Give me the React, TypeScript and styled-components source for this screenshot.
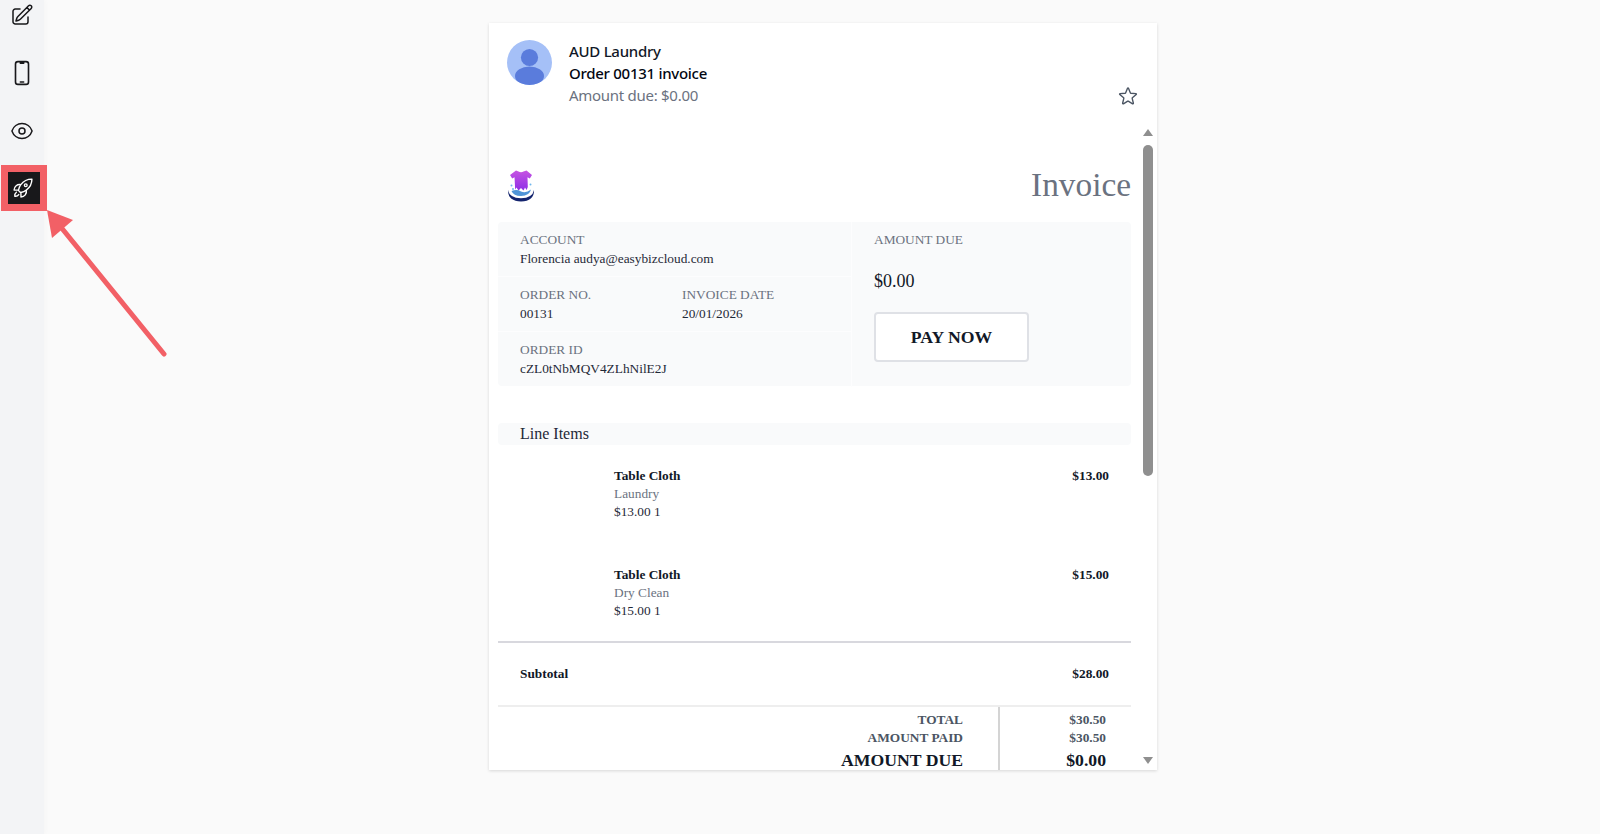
import type React from "react"
import styled, { createGlobalStyle } from "styled-components"
import {
  HiOutlineDevicePhoneMobile,
  HiOutlineEye,
  HiOutlinePencilSquare,
  HiOutlineRocketLaunch,
  HiOutlineStar,
} from "react-icons/hi2"

const GlobalStyle = createGlobalStyle`
  html, body {
    margin: 0;
    height: 100%;
    background: #fafafa;
  }
  * {
    box-sizing: border-box;
  }
`

const Page = styled.div`
  position: relative;
  display: flex;
  width: 1600px;
  height: 834px;
  overflow: hidden;
  background: #fafafa;
`

const Sidebar = styled.nav`
  flex: 0 0 44px;
  width: 44px;
  min-width: 0;
  display: flex;
  flex-direction: column;
  align-items: center;
  gap: 28px;
  background: #f3f4f6;
  box-shadow: 2px 0 4px rgba(0, 0, 0, 0.02);
`

const SideIcon = styled.div<{ $size: number }>`
  height: 30px;
  display: flex;
  align-items: center;
  justify-content: center;
  color: #18181b;
  font-size: ${(p) => p.$size}px;
`

const HighlightedIcon = styled.div`
  flex: 0 0 46px;
  width: 46px;
  height: 46px;
  margin: -9px 0 0 4px;
  padding: 0 2px 1px 0;
  border: 7px solid #f26066;
  background: #18181b;
  color: #fff;
  display: flex;
  align-items: center;
  justify-content: center;
  font-size: 22px;
`

const ArrowLayer = styled.svg`
  position: absolute;
  left: 0;
  top: 0;
  pointer-events: none;
`

const Main = styled.main`
  flex: 1;
  padding: 23px 443px 0 445px;
`

const Card = styled.article`
  width: 668px;
  height: 747px;
  background: #fff;
  box-shadow: 0 1px 3px rgba(0, 0, 0, 0.14);
  display: flex;
  flex-direction: column;
  overflow: hidden;
`

const CardHeader = styled.header`
  flex: 0 0 110px;
  display: flex;
  padding: 17px 18px 0 18px;
  font-family: "Noto Sans", sans-serif;
`

const Avatar = styled.svg`
  flex: 0 0 45px;
  width: 45px;
  height: 45px;
`

const HeaderText = styled.div`
  flex: 1;
  margin-left: 17px;
  font-size: 15px;
  line-height: 22px;
  letter-spacing: -0.28px;
  color: #111827;
`

const Shop = styled.div`
  font-weight: 500;
`

const OrderTitle = styled.div`
  font-weight: 500;
  color: #030712;
`

const AmountLine = styled.div`
  color: #6b7280;
`

const StarButton = styled.div`
  align-self: flex-start;
  margin-top: 45px;
  font-size: 22px;
  line-height: 0;
  color: #4b5563;
`

const BodyRow = styled.div`
  flex: 1;
  min-height: 0;
  display: flex;
`

const Invoice = styled.div`
  flex: 1;
  min-width: 0;
  padding: 0 0 0 9px;
  font-family: "Liberation Serif", serif;
  overflow: hidden;
`

const Scrollbar = styled.div`
  flex: 0 0 26px;
  display: flex;
  flex-direction: column;
  align-items: center;
  background: #fff;
`

const ScrollArrow = styled.div<{ $down?: boolean }>`
  flex: 0 0 auto;
  width: 0;
  height: 0;
  border-left: 5px solid transparent;
  border-right: 5px solid transparent;
  ${(p) => (p.$down ? "border-top: 7px solid #8f8f8f;" : "border-bottom: 7px solid #8f8f8f;")}
  margin-top: ${(p) => (p.$down ? "281px" : "-4px")};
  margin-left: 7px;
`

const ScrollThumb = styled.div`
  width: 10px;
  height: 331px;
  margin: 9px 0 0 7px;
  border-radius: 5px;
  background: #8f8f8f;
`

const TitleRow = styled.div`
  height: 89px;
  padding: 36px 0 0 9px;
  display: flex;
  justify-content: space-between;
  align-items: flex-start;
`

const Logo = styled.svg`
  width: 28px;
  height: 32px;
  margin-top: 1px;
`

const InvoiceTitle = styled.h1`
  margin: -4px 0 0;
  font-size: 33.33px;
  line-height: 40px;
  font-weight: 400;
  color: #6b7280;
`

const InfoPanel = styled.section`
  display: grid;
  grid-template-columns: 354px 1fr;
  height: 164px;
  background: #f9fafb;
  border-radius: 4px;
`

const InfoLeft = styled.div`
  display: flex;
  flex-direction: column;
  border-right: 1px solid #fdfdfe;
`

const InfoCellRow = styled.div`
  height: 55px;
  display: flex;
  border-bottom: 1px solid #fdfdfe;

  &:last-child {
    border-bottom: 0;
  }
`

const InfoCell = styled.div<{ $w?: number }>`
  width: ${(p) => (p.$w ? `${p.$w}px` : "auto")};
  padding: 8px 0 0 22px;
`

const Label = styled.div`
  font-size: 13.33px;
  line-height: 20px;
  color: #6b7280;
`

const Value = styled.div`
  font-size: 13.33px;
  line-height: 18px;
  color: #1f2937;
`

const DueCell = styled.div`
  padding: 8px 0 0 22px;
`

const DueAmount = styled.div`
  margin-top: 21px;
  font-size: 18px;
  line-height: 20px;
  color: #111827;
`

const PayButton = styled.button`
  display: block;
  width: 155px;
  height: 50px;
  margin-top: 21px;
  background: #fff;
  border: 2px solid #dfe1e6;
  border-radius: 4px;
  font-family: "Liberation Serif", serif;
  font-size: 17.7px;
  font-weight: 700;
  color: #111827;
`

const SectionHead = styled.div`
  height: 22px;
  margin-top: 37px;
  padding-left: 22px;
  background: #f9fafb;
  border-radius: 4px;
  font-size: 16px;
  line-height: 22px;
  color: #1f2937;
`

const LineItem = styled.div`
  height: 98.5px;
  padding: 22px 22px 0 116px;
  display: flex;
  justify-content: space-between;
  font-size: 13.33px;
  line-height: 18px;
`

const ItemName = styled.div`
  font-weight: 700;
  color: #111827;
`

const ItemKind = styled.div`
  color: #6b7280;
`

const ItemQty = styled.div`
  color: #1f2937;
`

const ItemPrice = styled.div`
  font-weight: 700;
  color: #111827;
`

const SubtotalRow = styled.div`
  height: 66px;
  margin-top: -1px;
  padding: 0 22px;
  border-top: 2px solid #d8d8de;
  border-bottom: 2px solid #eeeeee;
  display: flex;
  justify-content: space-between;
  align-items: center;
  font-size: 13.33px;
  font-weight: 700;
  color: #111827;
`

const Totals = styled.div`
  display: grid;
  grid-template-columns: 502px 1fr;
  height: 70px;
`

const TotalLabels = styled.div`
  padding: 4px 35px 0 0;
  border-right: 2px solid #d4d4d4;
  text-align: right;
`

const TotalValues = styled.div`
  padding: 4px 25px 0 0;
  text-align: right;
`

const TotalLine = styled.div<{ $big?: boolean }>`
  font-size: ${(p) => (p.$big ? 17.7 : 13.33)}px;
  line-height: ${(p) => (p.$big ? 27 : 18)}px;
  font-weight: 700;
  color: ${(p) => (p.$big ? "#111827" : "#4b5563")};
`

const AvatarImage: React.FC = () => (
  <Avatar viewBox="0 0 45 45" aria-hidden="true">
    <defs>
      <clipPath id="avatar-clip">
        <circle cx="22.5" cy="22.5" r="22.5" />
      </clipPath>
    </defs>
    <circle cx="22.5" cy="22.5" r="22.5" fill="#a5c0f7" />
    <g clipPath="url(#avatar-clip)" fill="#5a7cdc">
      <circle cx="22.5" cy="17.5" r="8.6" />
      <ellipse cx="22.5" cy="36" rx="14.5" ry="9.5" />
    </g>
  </Avatar>
)

const LaundryLogo: React.FC = () => (
  <Logo viewBox="0 0 28 32" aria-hidden="true">
    <defs>
      <linearGradient id="shirt" x1="0" y1="0" x2="0" y2="1">
        <stop offset="0" stopColor="#c653e2" />
        <stop offset="1" stopColor="#8f2fe6" />
      </linearGradient>
    </defs>
    <path
      d="M9 0.5 L11.5 1.5 Q14 3 16.5 1.5 L19.5 0.5 L25 5 L22.8 8.5 L20.5 7.2 L20.8 17 L19.6 20 L18 17.5 L16.5 20.5 L14 18 L11.5 20.5 L9.5 17.5 L8.2 19.5 L7.5 7.2 L5.2 8.5 L3 5 Z"
      fill="url(#shirt)"
    />
    <circle cx="4.5" cy="15.5" r="1" fill="#6fb7ee" />
    <circle cx="23.5" cy="14.5" r="1" fill="#6fb7ee" />
    <circle cx="6" cy="19" r="1" fill="#6fb7ee" />
    <path d="M4.5 21 Q10 19 14 21.5 Q19 23.5 24 19.5 Q22.5 26 14 26 Q6.5 26 4.5 21 Z" fill="#4f94d8" />
    <path d="M1 20 Q0.5 31 14 31.5 Q27.5 31 27 20 Q25.5 28 14 28.3 Q2.5 28 1 20 Z" fill="#14246e" />
  </Logo>
)

const App: React.FC = () => {
  return (
    <Page>
      <GlobalStyle />
      <Sidebar>
        <SideIcon $size={24}>
          <HiOutlinePencilSquare />
        </SideIcon>
        <SideIcon $size={26}>
          <HiOutlineDevicePhoneMobile />
        </SideIcon>
        <SideIcon $size={24}>
          <HiOutlineEye />
        </SideIcon>
        <HighlightedIcon>
          <HiOutlineRocketLaunch />
        </HighlightedIcon>
      </Sidebar>

      <Main>
        <Card>
          <CardHeader>
            <AvatarImage />
            <HeaderText>
              <Shop>AUD Laundry</Shop>
              <OrderTitle>Order 00131 invoice</OrderTitle>
              <AmountLine>Amount due: $0.00</AmountLine>
            </HeaderText>
            <StarButton>
              <HiOutlineStar />
            </StarButton>
          </CardHeader>

          <BodyRow>
            <Invoice>
              <TitleRow>
                <LaundryLogo />
                <InvoiceTitle>Invoice</InvoiceTitle>
              </TitleRow>

              <InfoPanel>
                <InfoLeft>
                  <InfoCellRow>
                    <InfoCell>
                      <Label>ACCOUNT</Label>
                      <Value>Florencia audya@easybizcloud.com</Value>
                    </InfoCell>
                  </InfoCellRow>
                  <InfoCellRow>
                    <InfoCell $w={162}>
                      <Label>ORDER NO.</Label>
                      <Value>00131</Value>
                    </InfoCell>
                    <InfoCell>
                      <Label>INVOICE DATE</Label>
                      <Value>20/01/2026</Value>
                    </InfoCell>
                  </InfoCellRow>
                  <InfoCellRow>
                    <InfoCell>
                      <Label>ORDER ID</Label>
                      <Value>cZL0tNbMQV4ZLhNilE2J</Value>
                    </InfoCell>
                  </InfoCellRow>
                </InfoLeft>
                <DueCell>
                  <Label>AMOUNT DUE</Label>
                  <DueAmount>$0.00</DueAmount>
                  <PayButton>PAY NOW</PayButton>
                </DueCell>
              </InfoPanel>

              <SectionHead>Line Items</SectionHead>

              <LineItem>
                <div>
                  <ItemName>Table Cloth</ItemName>
                  <ItemKind>Laundry</ItemKind>
                  <ItemQty>$13.00 1</ItemQty>
                </div>
                <ItemPrice>$13.00</ItemPrice>
              </LineItem>
              <LineItem>
                <div>
                  <ItemName>Table Cloth</ItemName>
                  <ItemKind>Dry Clean</ItemKind>
                  <ItemQty>$15.00 1</ItemQty>
                </div>
                <ItemPrice>$15.00</ItemPrice>
              </LineItem>

              <SubtotalRow>
                <span>Subtotal</span>
                <span>$28.00</span>
              </SubtotalRow>

              <Totals>
                <TotalLabels>
                  <TotalLine>TOTAL</TotalLine>
                  <TotalLine>AMOUNT PAID</TotalLine>
                  <TotalLine $big>AMOUNT DUE</TotalLine>
                </TotalLabels>
                <TotalValues>
                  <TotalLine>$30.50</TotalLine>
                  <TotalLine>$30.50</TotalLine>
                  <TotalLine $big>$0.00</TotalLine>
                </TotalValues>
              </Totals>
            </Invoice>

            <Scrollbar>
              <ScrollArrow />
              <ScrollThumb />
              <ScrollArrow $down />
            </Scrollbar>
          </BodyRow>
        </Card>
      </Main>

      <ArrowLayer width="200" height="400" viewBox="0 0 200 400" aria-hidden="true">
        <line x1="164" y1="354" x2="60" y2="226" stroke="#f26066" strokeWidth="5" strokeLinecap="round" />
        <path d="M47 210 L73 220 L52 238 Z" fill="#f26066" />
      </ArrowLayer>
    </Page>
  )
}

export default App
